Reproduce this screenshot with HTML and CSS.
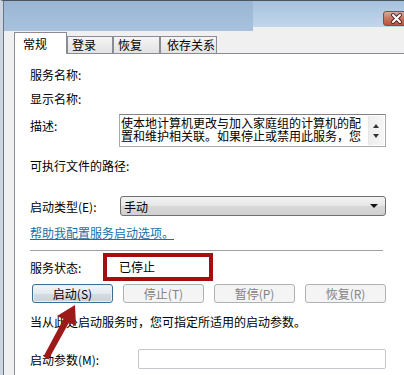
FILE: index.html
```html
<!DOCTYPE html>
<html lang="zh-CN">
<head>
    <meta charset="UTF-8">
    <title>服务属性</title>
    <link rel="stylesheet" href="styles.css">
</head>
<body>
    <div class="window">
        <div class="frame">
            <div class="titlebar">
                <div class="title-cover"></div>
                <div class="title-rest">
                    <div class="close">
                        <svg width="26" height="13" viewBox="0 0 26 13">
                            <path d="M9 3 L16 10 M16 3 L9 10" stroke="#5a2a22" stroke-width="4" stroke-linecap="round"/>
                            <path d="M9 3 L16 10 M16 3 L9 10" stroke="#fff" stroke-width="2" stroke-linecap="round"/>
                        </svg>
                    </div>
                </div>
            </div>

            <div class="client">
                <div class="tabs">
                    <div class="tab tab-active tab-general">常规</div>
                    <div class="tab tab-login">登录</div>
                    <div class="tab tab-recover">恢复</div>
                    <div class="tab tab-deps">依存关系</div>
                </div>

                <div class="panel">
                    <div class="row r-name">
                        <span class="label">服务名称:</span>
                    </div>
                    <div class="row r-display">
                        <span class="label">显示名称:</span>
                    </div>
                    <div class="row r-desc">
                        <span class="label label-desc">描述:</span>
                        <div class="desc-box">
                            <div class="desc-text">使本地计算机更改与加入家庭组的计算机的配置和维护相关联。如果停止或禁用此服务，您</div>
                            <div class="scrollbar">
                                <span class="arrow-up"></span>
                                <span class="arrow-down"></span>
                            </div>
                        </div>
                    </div>
                    <div class="row r-path">
                        <span class="label">可执行文件的路径:</span>
                    </div>
                    <div class="row r-type">
                        <span class="label">启动类型(E):</span>
                        <div class="select">
                            <span>手动</span>
                            <span class="select-arrow"></span>
                        </div>
                    </div>
                    <div class="link-line">
                        <a class="help-link" href="#">帮助我配置服务启动选项。</a>
                    </div>
                    <div class="sep"></div>
                    <div class="row r-status">
                        <span class="label label-status">服务状态:</span>
                        <div class="status-box">已停止</div>
                    </div>
                    <div class="buttons">
                        <button class="btn btn-focus">启动(S)</button>
                        <button class="btn" disabled>停止(T)</button>
                        <button class="btn" disabled>暂停(P)</button>
                        <button class="btn" disabled>恢复(R)</button>
                    </div>
                    <div class="hint">当从此处启动服务时，您可指定所适用的启动参数。</div>
                    <div class="row r-param">
                        <span class="label label-param">启动参数(M):</span>
                        <div class="param-input"></div>
                    </div>
                </div>
            </div>
        </div>

        <!-- 标注箭头 -->
        <svg class="pointer" width="50" height="65" viewBox="40 300 50 65">
            <polygon points="75,305 76,326 69,322.5 48.5,359.5 43.5,356.5 63.5,319 57,316" fill="#9c1a1a"/>
        </svg>
    </div>
</body>
</html>
```

FILE: styles.css
```css
/* Página */
body {
    margin: 0;
    width: 404px;
    height: 375px;
    overflow: hidden;
    font-family: "Noto Sans CJK SC", "Liberation Sans", sans-serif;
    font-size: 12px;
    color: #000;
    background: #f0f0f0;
}

/* Marco de la ventana */
.window {
    position: relative;
    height: 374px;
    border-top: 1px solid #4c5661;
    border-left: 3px solid #cdd6e0;
}

.frame {
    display: flex;
    flex-direction: column;
    height: 100%;
    border-left: 1px solid #6a7582;
}

/* Barra de título */
.titlebar {
    display: flex;
    height: 30px;
    flex-shrink: 0;
}

.title-cover {
    width: 249px;
    background: linear-gradient(#9ab6d4, #a8c2dd);
}

.title-rest {
    flex: 1;
    display: flex;
    justify-content: flex-end;
    align-items: flex-start;
    padding-top: 10px;
    background: linear-gradient(#a6c2df, #c2d6eb) 0 0 / 100% 26px no-repeat, #f0f0f0;
}

.close {
    width: 26px;
    height: 13px;
    margin-right: -7px;
    border: 1px solid #8a4a3c;
    border-radius: 3px;
    background: linear-gradient(#dba898, #c97560 50%, #b9533e);
}

.close svg {
    display: block;
}

/* Zona de cliente */
.client {
    flex: 1;
    padding: 1px 0 0 10px;
}

/* Pestañas */
.tabs {
    display: flex;
    align-items: flex-end;
    height: 21px;
}

.tab {
    box-sizing: border-box;
    height: 17px;
    line-height: 15px;
    padding-left: 4px;
    border: 1px solid #898c95;
    border-bottom: none;
    background: linear-gradient(#f5f5f5, #e2e2e2);
}

.tab-active {
    position: relative;
    z-index: 1;
    height: 22px;
    line-height: 22px;
    margin-bottom: -1px;
    padding-left: 8px;
    background: #fff;
}

.tab-general { width: 53px; }
.tab-login { width: 46px; }
.tab-recover { width: 47px; }
.tab-deps { width: 57px; padding-left: 6px; }

/* Panel */
.panel {
    height: 330px;
    margin-right: -10px;
    padding-left: 15px;
    background: #fff;
    border: 1px solid #898c95;
}

.row {
    display: flex;
    align-items: center;
}

.label {
    width: 89px;
    flex-shrink: 0;
    white-space: nowrap;
}

.r-name { margin-top: 8px; height: 24px; }
.r-display { height: 24px; }
.r-desc { margin-top: 4px; height: 33px; align-items: flex-start; }
.r-path { margin-top: 6px; height: 24px; }
.r-type { margin-top: 19px; height: 20px; }
.r-status { margin-top: 2px; height: 28px; }
.r-param { margin-top: 20px; height: 20px; }

.label-desc {
    padding-top: 5px;
    line-height: 13px;
}

.label-status { width: 73px; }
.label-param { width: 108px; }

/* Caja de descripción */
.desc-box {
    display: flex;
    box-sizing: border-box;
    width: 267px;
    height: 33px;
    border: 1px solid #a6a9ae;
    border-top-color: #7f8388;
}

.desc-text {
    flex: 1;
    height: 27px;
    overflow: hidden;
    padding: 1px 0 0 1px;
    line-height: 13px;
}

.scrollbar {
    position: relative;
    width: 15px;
    margin: 1px 1px 1px 0;
    background: linear-gradient(90deg, #eeeeee, #f6f6f6);
    border-left: 1px solid #e6e6e6;
}

.arrow-up,
.arrow-down {
    position: absolute;
    left: 4px;
    width: 0;
    height: 0;
    border-left: 3.5px solid transparent;
    border-right: 3.5px solid transparent;
}

.arrow-up {
    top: 8px;
    border-bottom: 4px solid #333;
}

.arrow-down {
    bottom: 7px;
    border-top: 4px solid #333;
}

/* Desplegable */
.select {
    display: flex;
    align-items: center;
    justify-content: space-between;
    box-sizing: border-box;
    width: 266px;
    height: 20px;
    margin-left: 1px;
    padding: 0 7px 0 3px;
    border: 1px solid #707070;
    border-radius: 3px;
    background: linear-gradient(#f3f3f3, #e6e6e6 50%, #d8d8d8 51%, #d0d0d0);
}

.select-arrow {
    width: 0;
    height: 0;
    border-left: 4px solid transparent;
    border-right: 4px solid transparent;
    border-top: 4px solid #111;
}

/* Enlace */
.link-line {
    margin-top: 10px;
    height: 14px;
    line-height: 14px;
}

.help-link {
    color: #1a6fa3;
    text-decoration: underline;
}

.sep {
    width: 353px;
    height: 1px;
    margin-top: 10px;
    background: #a0a0a0;
}

/* Estado */
.status-box {
    box-sizing: border-box;
    width: 110px;
    height: 28px;
    padding-left: 12px;
    line-height: 20px;
    border: 4px solid #a30e0e;
}

/* Botones */
.buttons {
    display: grid;
    grid-template-columns: repeat(4, 1fr);
    gap: 10px;
    width: 354px;
    height: 19px;
    margin: 3px 0 0 2px;
}

.btn {
    box-sizing: border-box;
    height: 19px;
    padding: 0;
    font-family: inherit;
    font-size: 12px;
    color: #838383;
    border: 1px solid #adb2b5;
    border-radius: 3px;
    background: #f4f4f4;
}

.btn-focus {
    color: #000;
    border-color: #3d6f94;
    background: linear-gradient(#f2f6f9, #e2e9ef 50%, #d3dce4 51%, #c9d3dc);
    box-shadow: inset 0 0 0 1px #e4f1fb;
}

.hint {
    margin-top: 12px;
    line-height: 14px;
}

.param-input {
    box-sizing: border-box;
    width: 248px;
    height: 20px;
    border: 1px solid #c3c6cb;
    border-radius: 2px;
    background: #fff;
}

/* Flecha de anotación */
.pointer {
    position: absolute;
    left: 37px;
    top: 299px;
}
```
